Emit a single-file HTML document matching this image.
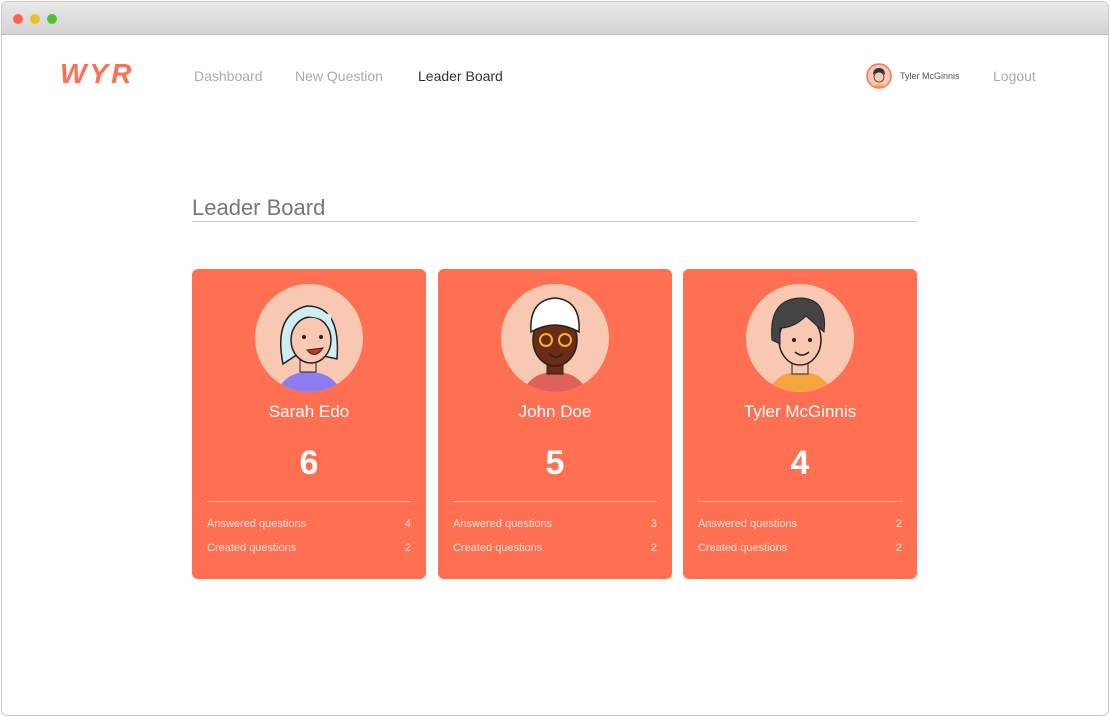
<!DOCTYPE html>
<html><head><meta charset="utf-8"><style>
*{margin:0;padding:0;box-sizing:border-box}
body{width:1110px;height:717px;background:#fff;font-family:"Liberation Sans",sans-serif;position:relative;overflow:hidden}
.win{position:absolute;left:1px;top:1px;width:1108px;height:715px;border:1px solid #c8c8c8;border-radius:6px;overflow:hidden;background:#fff}
.bar{height:33px;background:linear-gradient(#e8e8e8,#d4d4d4);border-bottom:1px solid #bdbdbd;position:relative}
.dot{position:absolute;top:12px;width:10px;height:10px;border-radius:50%}
.a{position:absolute;white-space:nowrap}
.nav{font-size:14px;color:#aaa;top:68px}
.card{position:absolute;top:269px;width:234px;height:310px;background:#ff7052;border-radius:6px;color:#fff}
.av{position:absolute;left:63px;top:15px;width:108px;height:108px;border-radius:50%;background:#f9c8b2;overflow:hidden}
.nm{position:absolute;top:133px;width:100%;text-align:center;font-size:17px}
.sc{position:absolute;top:175px;width:100%;text-align:center;font-size:34px;font-weight:bold}
.ln{position:absolute;left:15px;right:15px;top:232px;border-top:1px solid rgba(255,255,255,.55)}
.row{position:absolute;left:15px;right:15px;font-size:11px;color:#ffe3dc;display:flex;justify-content:space-between}
</style></head><body>
<div class="win">
<div class="bar">
<div class="dot" style="left:11px;background:#fc5f57"></div>
<div class="dot" style="left:28px;background:#e8c12a"></div>
<div class="dot" style="left:45px;background:#53c22b"></div>
</div>
</div>
<div class="a" style="left:60px;top:58px;font-size:28px;font-weight:bold;font-style:italic;color:#ff7052;letter-spacing:3px">WYR</div>
<div class="a nav" style="left:194px">Dashboard</div>
<div class="a nav" style="left:295px">New Question</div>
<div class="a nav" style="left:418px;color:#333">Leader Board</div>
<svg class="a" style="left:866px;top:63px" width="26" height="26" viewBox="0 0 26 26"><circle cx="13" cy="13" r="12" fill="#f9c8b2" stroke="#ff7052" stroke-width="1.5"/><path d="M7 12 Q7 5 13 5 Q19 5 19 12 L17 10 L9 10Z" fill="#333"/><circle cx="13" cy="14" r="5" fill="#f9c8b2" stroke="#333" stroke-width=".8"/><path d="M7 24 Q13 19 19 24" fill="#f7a440"/></svg>
<div class="a" style="left:900px;top:71px;font-size:9px;color:#555">Tyler McGinnis</div>
<div class="a nav" style="left:993px">Logout</div>
<div class="a" style="left:192px;top:195px;font-size:22px;color:#777">Leader Board</div>
<div class="a" style="left:192px;top:221px;width:725px;border-top:1px solid #ccc"></div>

<div class="card" style="left:192px">
<div class="av"><svg width="108" height="108" viewBox="0 0 108 108"><path d="M28 80 Q18 30 52 22 Q86 22 82 75 L60 70 L40 72Z" fill="#cfeef2" stroke="#222" stroke-width="1.5"/><path d="M22 108 Q30 88 54 88 Q78 88 86 108Z" fill="#8d7bf2"/><rect x="45" y="70" width="16" height="18" fill="#f9c8b2" stroke="#222"/><ellipse cx="56" cy="56" rx="20" ry="23" fill="#f9c8b2" stroke="#222" stroke-width="1.5"/><path d="M34 40 Q50 25 76 40 L76 30 L40 28Z" fill="#cfeef2"/><circle cx="49" cy="53" r="2" fill="#222"/><circle cx="66" cy="53" r="2" fill="#222"/><path d="M52 66 Q60 76 68 64Z" fill="#c0392b" stroke="#222"/></svg></div>
<div class="nm">Sarah Edo</div><div class="sc">6</div><div class="ln"></div>
<div class="row" style="top:249px"><span>Answered questions</span><span>4</span></div>
<div class="row" style="top:273px"><span>Created questions</span><span>2</span></div>
</div>

<div class="card" style="left:438px">
<div class="av"><svg width="108" height="108" viewBox="0 0 108 108"><path d="M22 108 Q30 88 54 88 Q78 88 86 108Z" fill="#e0605a"/><rect x="46" y="72" width="16" height="18" fill="#6b2b14" stroke="#222"/><ellipse cx="54" cy="56" rx="22" ry="26" fill="#6b2b14" stroke="#222" stroke-width="1.5"/><path d="M30 48 Q28 16 54 14 Q80 16 78 48 Q54 34 30 48Z" fill="#fff" stroke="#222" stroke-width="1.5"/><circle cx="45" cy="56" r="6" fill="none" stroke="#f2b530" stroke-width="2"/><circle cx="64" cy="56" r="6" fill="none" stroke="#f2b530" stroke-width="2"/><path d="M48 70 Q55 76 62 70" stroke="#222" fill="none" stroke-width="1.5"/></svg></div>
<div class="nm">John Doe</div><div class="sc">5</div><div class="ln"></div>
<div class="row" style="top:249px"><span>Answered questions</span><span>3</span></div>
<div class="row" style="top:273px"><span>Created questions</span><span>2</span></div>
</div>

<div class="card" style="left:683px">
<div class="av"><svg width="108" height="108" viewBox="0 0 108 108"><path d="M22 108 Q30 88 54 88 Q78 88 86 108Z" fill="#f7a440"/><rect x="46" y="72" width="16" height="18" fill="#f9c8b2" stroke="#222"/><ellipse cx="54" cy="56" rx="21" ry="25" fill="#f9c8b2" stroke="#222" stroke-width="1.5"/><path d="M26 56 Q22 14 56 14 Q82 16 78 48 L60 32 Q48 44 34 44 L34 60Z" fill="#444" stroke="#222"/><circle cx="48" cy="56" r="2" fill="#222"/><circle cx="64" cy="56" r="2" fill="#222"/><path d="M49 68 Q56 74 63 68" stroke="#222" fill="none" stroke-width="1.5"/></svg></div>
<div class="nm">Tyler McGinnis</div><div class="sc">4</div><div class="ln"></div>
<div class="row" style="top:249px"><span>Answered questions</span><span>2</span></div>
<div class="row" style="top:273px"><span>Created questions</span><span>2</span></div>
</div>
</body></html>
